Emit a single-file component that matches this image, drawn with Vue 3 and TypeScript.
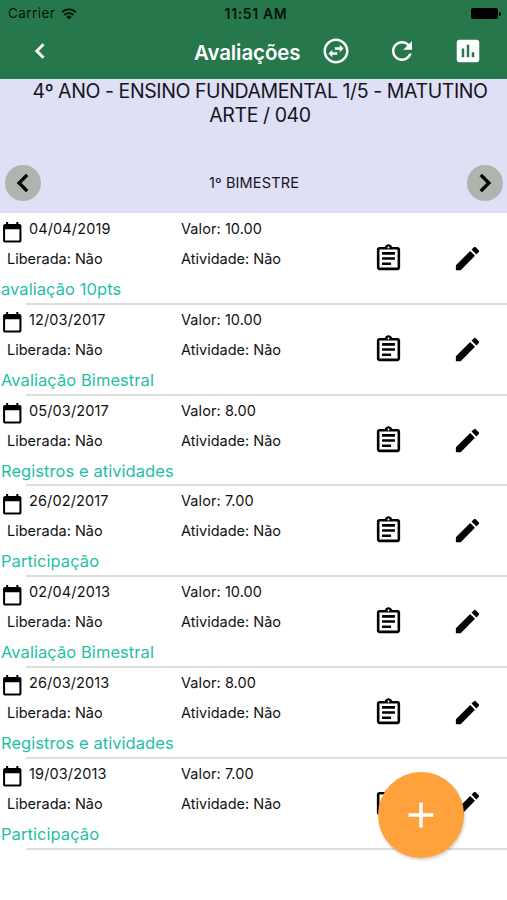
<script setup lang="ts">
interface Assessment {
  date: string
  value: string
  title: string
}

const assessments: Assessment[] = [
  { date: '04/04/2019', value: '10.00', title: 'avaliação 10pts' },
  { date: '12/03/2017', value: '10.00', title: 'Avaliação Bimestral' },
  { date: '05/03/2017', value: '8.00', title: 'Registros e atividades' },
  { date: '26/02/2017', value: '7.00', title: 'Participação' },
  { date: '02/04/2013', value: '10.00', title: 'Avaliação Bimestral' },
  { date: '26/03/2013', value: '8.00', title: 'Registros e atividades' },
  { date: '19/03/2013', value: '7.00', title: 'Participação' },
]
</script>

<template>
  <div class="screen">
    <header class="top">
      <div class="status">
        <div class="carrier">
          <span class="carrier-name">Carrier</span>
          <svg class="wifi" viewBox="0 0 16 12">
            <path d="M1 4.3a10 10 0 0 1 14 0M3.5 7a6.4 6.4 0 0 1 9 0" fill="none" stroke="currentColor" stroke-width="1.8" />
            <path d="M8 11.6 5.3 8.9a3.8 3.8 0 0 1 5.4 0z" fill="currentColor" />
          </svg>
        </div>
        <span class="clock">11:51 AM</span>
        <div class="battery"><i class="cell"></i><i class="cap"></i></div>
      </div>
      <nav class="bar">
        <button class="tool" aria-label="Voltar">
          <svg viewBox="0 0 24 24"><path d="M15.41 7.41 14 6l-6 6 6 6 1.41-1.41L10.83 12z" stroke="currentColor" stroke-width=".35" /></svg>
        </button>
        <h1 class="title">Avaliações</h1>
        <div class="tools">
          <button class="tool" aria-label="Trocar">
            <svg viewBox="0 0 24 24"><path d="M12 4c4.41 0 8 3.59 8 8s-3.59 8-8 8-8-3.59-8-8 3.59-8 8-8m0-2C6.48 2 2 6.48 2 12s4.48 10 10 10 10-4.48 10-10S17.52 2 12 2zm6 8-3-3v2h-4v2h4v2l3-3zM6 14l3 3v-2h4v-2H9v-2l-3 3z" /></svg>
          </button>
          <button class="tool" aria-label="Atualizar">
            <svg viewBox="0 0 24 24"><path d="M17.65 6.35C16.2 4.9 14.21 4 12 4c-4.42 0-7.99 3.58-7.99 8s3.57 8 7.99 8c3.73 0 6.84-2.55 7.73-6h-2.08c-.82 2.33-3.04 4-5.65 4-3.31 0-6-2.69-6-6s2.69-6 6-6c1.66 0 3.14.69 4.22 1.78L13 11h7V4l-2.35 2.35z" /></svg>
          </button>
          <button class="tool" aria-label="Gráfico">
            <svg viewBox="0 0 24 24"><path d="M19 3H5c-1.1 0-2 .9-2 2v14c0 1.1.9 2 2 2h14c1.1 0 2-.9 2-2V5c0-1.1-.9-2-2-2zM9 17H7v-7h2v7zm4 0h-2V7h2v10zm4 0h-2v-4h2v4z" /></svg>
          </button>
        </div>
      </nav>
    </header>

    <section class="group">
      <h2 class="group-name">
        <span>4º ANO - ENSINO FUNDAMENTAL 1/5 - MATUTINO</span>
        <span>ARTE / 040</span>
      </h2>
      <div class="period">
        <button class="round" aria-label="Anterior">
          <svg viewBox="0 0 24 24"><path d="M15.41 7.41 14 6l-6 6 6 6 1.41-1.41L10.83 12z" stroke="currentColor" stroke-width=".4" /></svg>
        </button>
        <span class="period-name">1º BIMESTRE</span>
        <button class="round" aria-label="Próximo">
          <svg viewBox="0 0 24 24"><path d="M10 6 8.59 7.41 13.17 12l-4.58 4.59L10 18l6-6z" stroke="currentColor" stroke-width=".4" /></svg>
        </button>
      </div>
    </section>

    <ul class="list">
      <li v-for="item in assessments" :key="item.date" class="item">
        <div class="info">
          <div class="line first">
            <svg class="calendar" viewBox="0 0 24 24"><path d="M19 3h-1V1h-2v2H8V1H6v2H5c-1.11 0-2 .9-2 2v14c0 1.1.89 2 2 2h14c1.1 0 2-.9 2-2V5c0-1.1-.9-2-2-2zm0 16H5V8h14v11z" /></svg>
            <span class="date">{{ item.date }}</span>
            <span class="value">Valor: {{ item.value }}</span>
          </div>
          <div class="line second">
            <span class="released">Liberada: Não</span>
            <span class="activity">Atividade: Não</span>
          </div>
          <div class="name">{{ item.title }}</div>
        </div>
        <div class="actions">
          <svg class="action" viewBox="0 0 24 24"><path d="M7 15h7v2H7zm0-4h10v2H7zm0-4h10v2H7zm12-4h-4.18C14.4 1.84 13.3 1 12 1s-2.4.84-2.82 2H5c-1.1 0-2 .9-2 2v14c0 1.1.9 2 2 2h14c1.1 0 2-.9 2-2V5c0-1.1-.9-2-2-2zm-7-.25c.41 0 .75.34.75.75s-.34.75-.75.75-.75-.34-.75-.75.34-.75.75-.75zM19 19H5V5h14v14z" /></svg>
          <svg class="action" viewBox="0 0 24 24"><path d="M3 17.25V21h3.75L17.81 9.94l-3.75-3.75L3 17.25zM20.71 7.04a1 1 0 0 0 0-1.41l-2.34-2.34a1 1 0 0 0-1.41 0l-1.83 1.83 3.75 3.75 1.83-1.83z" /></svg>
        </div>
      </li>
    </ul>

    <button class="fab" aria-label="Adicionar">
      <svg viewBox="0 0 26 26"><path d="M13 .5v25M.5 13h25" stroke="currentColor" stroke-width="3.5" /></svg>
    </button>
  </div>
</template>

<style>
body {
  margin: 0;
  background: #fff;
}
</style>

<style scoped>
.screen {
  position: relative;
  width: 507px;
  height: 900px;
  overflow: hidden;
  background: #fff;
  color: #111;
  font-family: Inter, "Liberation Sans", sans-serif;
}
svg {
  display: block;
  fill: currentColor;
}
button {
  padding: 0;
  border: 0;
  background: none;
  color: inherit;
  font: inherit;
}
.top {
  box-sizing: border-box;
  height: 79px;
  background: #26784c;
}
.status {
  display: grid;
  grid-template-columns: 1fr auto 1fr;
  align-items: center;
  height: 27px;
  padding: 0 6px 0 8px;
  color: #04140b;
  font-size: 13.5px;
  line-height: 27px;
}
.carrier {
  display: flex;
  align-items: center;
  gap: 6px;
}
.carrier-name {
  letter-spacing: 0.45px;
}
.wifi {
  width: 16px;
  height: 12px;
}
.clock {
  padding-left: 3px;
  font-size: 14px;
  font-weight: 600;
  letter-spacing: 0.65px;
}
.battery {
  display: flex;
  align-items: center;
  justify-content: flex-end;
  gap: 1px;
}
.cell {
  width: 27px;
  height: 11px;
  border-radius: 2px;
  background: #000;
}
.cap {
  width: 2px;
  height: 4px;
  border-radius: 0 2px 2px 0;
  background: #000;
}
.bar {
  display: grid;
  grid-template-columns: 194px 1fr auto;
  align-items: center;
  height: 48px;
  padding-right: 24px;
  color: #fff;
}
.bar > .tool {
  margin-left: 25px;
}
.tool,
.tool svg {
  width: 30px;
  height: 30px;
}
.title {
  margin: 3px 0 0;
  font-size: 20.5px;
  font-weight: 600;
  letter-spacing: -0.1px;
  line-height: 26px;
  white-space: nowrap;
}
.tools {
  display: flex;
  gap: 36px;
}
.group {
  display: flex;
  flex-direction: column;
  justify-content: space-between;
  height: 134px;
  background: #dfdff5;
  color: #15151d;
}
.group-name {
  display: flex;
  flex-direction: column;
  align-items: center;
  margin: 0;
  padding-left: 13px;
  font-size: 19.5px;
  font-weight: 400;
  letter-spacing: -0.41px;
  line-height: 24px;
  white-space: nowrap;
}
.period {
  display: flex;
  align-items: center;
  justify-content: space-between;
  padding: 0 4px 12px 5px;
}
.period-name {
  padding-bottom: 1px;
  font-size: 14.5px;
  letter-spacing: 0.15px;
}
.round {
  width: 36px;
  height: 36px;
  border-radius: 50%;
  background: #afb4af;
  color: #000;
}
.round svg {
  width: 36px;
  height: 36px;
}
.list {
  margin: 0;
  padding: 0;
  list-style: none;
}
.item {
  display: flex;
  height: 90.8px;
}
/* The rule closes each row and starts past the calendar icon. */
.item::after {
  content: "";
  order: -1;
  align-self: flex-end;
  width: 481px;
  height: 2px;
  margin: 0 -507px -1px 26px;
  background: #dedede;
}
.info {
  width: 372.5px;
  font-size: 14.5px;
}
.line {
  display: grid;
  white-space: nowrap;
}
.first {
  grid-template-columns: 29px 152px auto;
  height: 31px;
  line-height: 31px;
}
.calendar {
  width: 24.5px;
  height: 24.5px;
  margin: 7.5px 0 0 -0.5px;
  color: #000;
}
.date {
  letter-spacing: 0.12px;
}
.value {
  letter-spacing: 0.08px;
}
.second {
  grid-template-columns: 174px auto;
  height: 30px;
  padding-left: 7px;
  line-height: 30px;
}
.name {
  padding-left: 1px;
  color: #1fbfa5;
  font-size: 16.5px;
  letter-spacing: 0.06px;
  line-height: 30px;
}
.actions {
  display: flex;
  gap: 48.5px;
  padding-top: 30px;
  color: #000;
}
.action {
  width: 31px;
  height: 31px;
}
.fab {
  position: absolute;
  right: 43px;
  bottom: 42.5px;
  display: grid;
  place-items: center;
  width: 86px;
  height: 86px;
  border-radius: 50%;
  background: #ffa23c;
  color: #fff;
  box-shadow: 1px 2px 3px rgba(0, 0, 0, 0.18);
}
.fab svg {
  width: 26px;
  height: 26px;
}
</style>
